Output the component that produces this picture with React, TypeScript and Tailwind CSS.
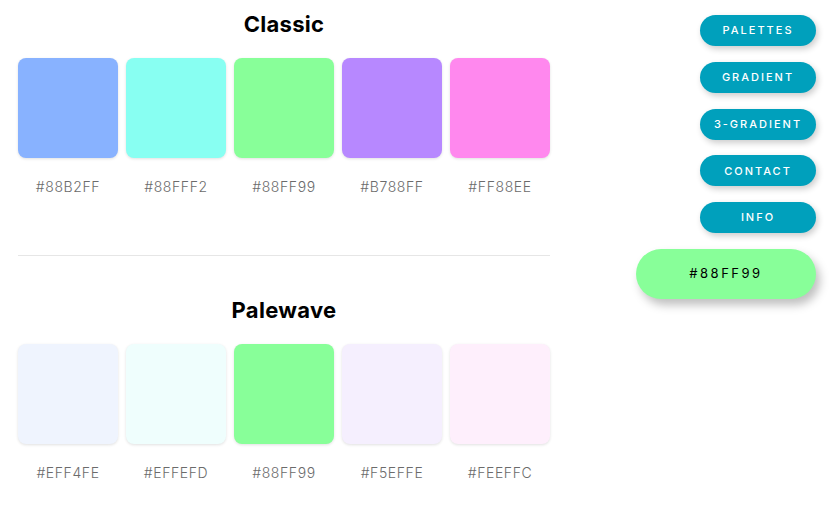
import React from "react";

const palettes = [
  { name: "Classic", colors: ["#88B2FF", "#88FFF2", "#88FF99", "#B788FF", "#FF88EE"] },
  { name: "Palewave", colors: ["#EFF4FE", "#EFFEFD", "#88FF99", "#F5EFFE", "#FEEFFC"] },
];

const nav = ["PALETTES", "GRADIENT", "3-GRADIENT", "CONTACT", "INFO"];

export default function App() {
  return (
    <div
      className="relative w-[829px] h-[508px] overflow-hidden bg-white"
      style={{ fontFamily: "Inter, 'Noto Sans', sans-serif" }}
    >
      <div className="w-[532px] ml-[18px] pt-[10px]">
        {palettes.map((p, i) => (
          <div key={p.name}>
            {i > 0 && <div className="h-px bg-[#e6e6e6] mt-[58px] mb-[40px]" />}
            <h2 className="text-center text-[22px] leading-[28px] font-bold text-black tracking-[0.3px]">{p.name}</h2>
            <div className="flex gap-[8px] mt-[20px]">
              {p.colors.map((c) => (
                <div key={c} className="w-[100px] flex flex-col items-center">
                  <div
                    className="w-[100px] h-[100px] rounded-[8px] shadow-[0_1px_3px_rgba(0,0,0,0.12)]"
                    style={{ backgroundColor: c }}
                  />
                  <div className="mt-[19px] text-[14px] leading-[20px] font-light tracking-[0.6px] text-[#6b6b6b]">{c}</div>
                </div>
              ))}
            </div>
          </div>
        ))}
      </div>
      <div className="absolute right-[13px] top-[15px] flex flex-col items-end">
        {nav.map((n) => (
          <div
            key={n}
            className="w-[116px] h-[31px] mb-[15.75px] rounded-full bg-[#00a0bc] text-white text-[11px] tracking-[2px] font-medium flex items-center justify-center shadow-[2px_3px_6px_rgba(0,0,0,0.2)]"
          >
            {n}
          </div>
        ))}
        <div className="w-[180px] h-[50px] rounded-full bg-[#88ff99] text-black text-[13px] tracking-[2.5px] flex items-center justify-center shadow-[4px_6px_10px_rgba(0,0,0,0.25)]">
          #88FF99
        </div>
      </div>
    </div>
  );
}
